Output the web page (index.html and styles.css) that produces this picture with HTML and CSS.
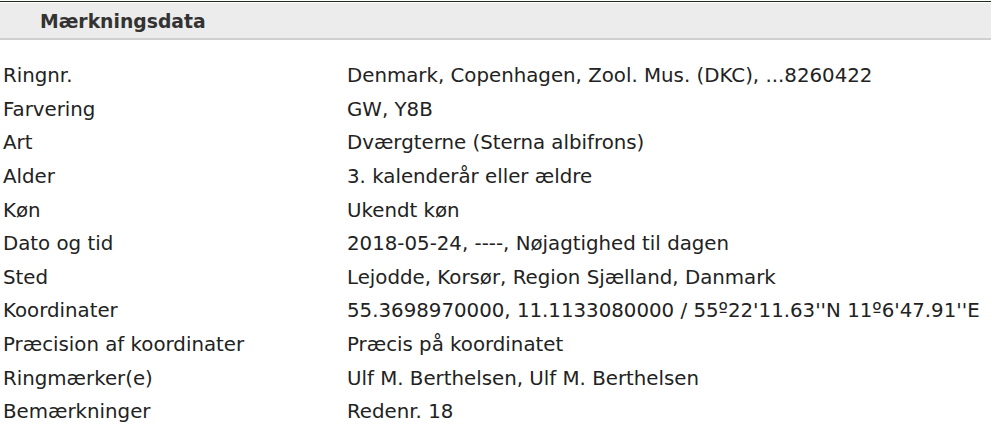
FILE: index.html
```html
<!DOCTYPE html>
<html lang="da">
<head>
    <meta charset="UTF-8">
    <title>Mærkningsdata</title>
    <link rel="stylesheet" href="styles.css">
</head>
<body>

    <!-- Section header -->
    <div class="section">
        <div class="section-title">Mærkningsdata</div>
    </div>

    <!-- Ringing data -->
    <div class="data">
        <div class="label">Ringnr.</div>
        <div class="value">Denmark, Copenhagen, Zool. Mus. (DKC), ...8260422</div>
        <div class="label">Farvering</div>
        <div class="value">GW, Y8B</div>
        <div class="label">Art</div>
        <div class="value">Dværgterne (Sterna albifrons)</div>
        <div class="label">Alder</div>
        <div class="value">3. kalenderår eller ældre</div>
        <div class="label">Køn</div>
        <div class="value">Ukendt køn</div>
        <div class="label">Dato og tid</div>
        <div class="value">2018-05-24, ----, Nøjagtighed til dagen</div>
        <div class="label">Sted</div>
        <div class="value">Lejodde, Korsør, Region Sjælland, Danmark</div>
        <div class="label">Koordinater</div>
        <div class="value">55.3698970000, 11.1133080000 / 55º22'11.63''N 11º6'47.91''E</div>
        <div class="label">Præcision af koordinater</div>
        <div class="value">Præcis på koordinatet</div>
        <div class="label">Ringmærker(e)</div>
        <div class="value">Ulf M. Berthelsen, Ulf M. Berthelsen</div>
        <div class="label">Bemærkninger</div>
        <div class="value">Redenr. 18</div>
    </div>

</body>
</html>
```

FILE: styles.css
```css
body {
    margin: 0;
    padding: 1px 0 0 0;
    font-family: "DejaVu Sans", Verdana, sans-serif;
    color: #222;
    background: #fff;
}

.section {
    border-top: 1px solid #1c2a1f;
    padding-top: 1px;
    margin-right: 1px;
}

.section-title {
    background-color: #ececec;
    border-bottom: 2px solid #cfcfcf;
    height: 35px;
    line-height: 37px;
    padding-left: 40px;
    font-size: 18.8px;
    font-weight: bold;
    color: #333;
}

.data {
    display: grid;
    grid-template-columns: 344px 1fr;
    grid-auto-rows: 33.6px;
    align-items: center;
    padding: 19px 0 0 3px;
    font-size: 19.8px;
}
```
